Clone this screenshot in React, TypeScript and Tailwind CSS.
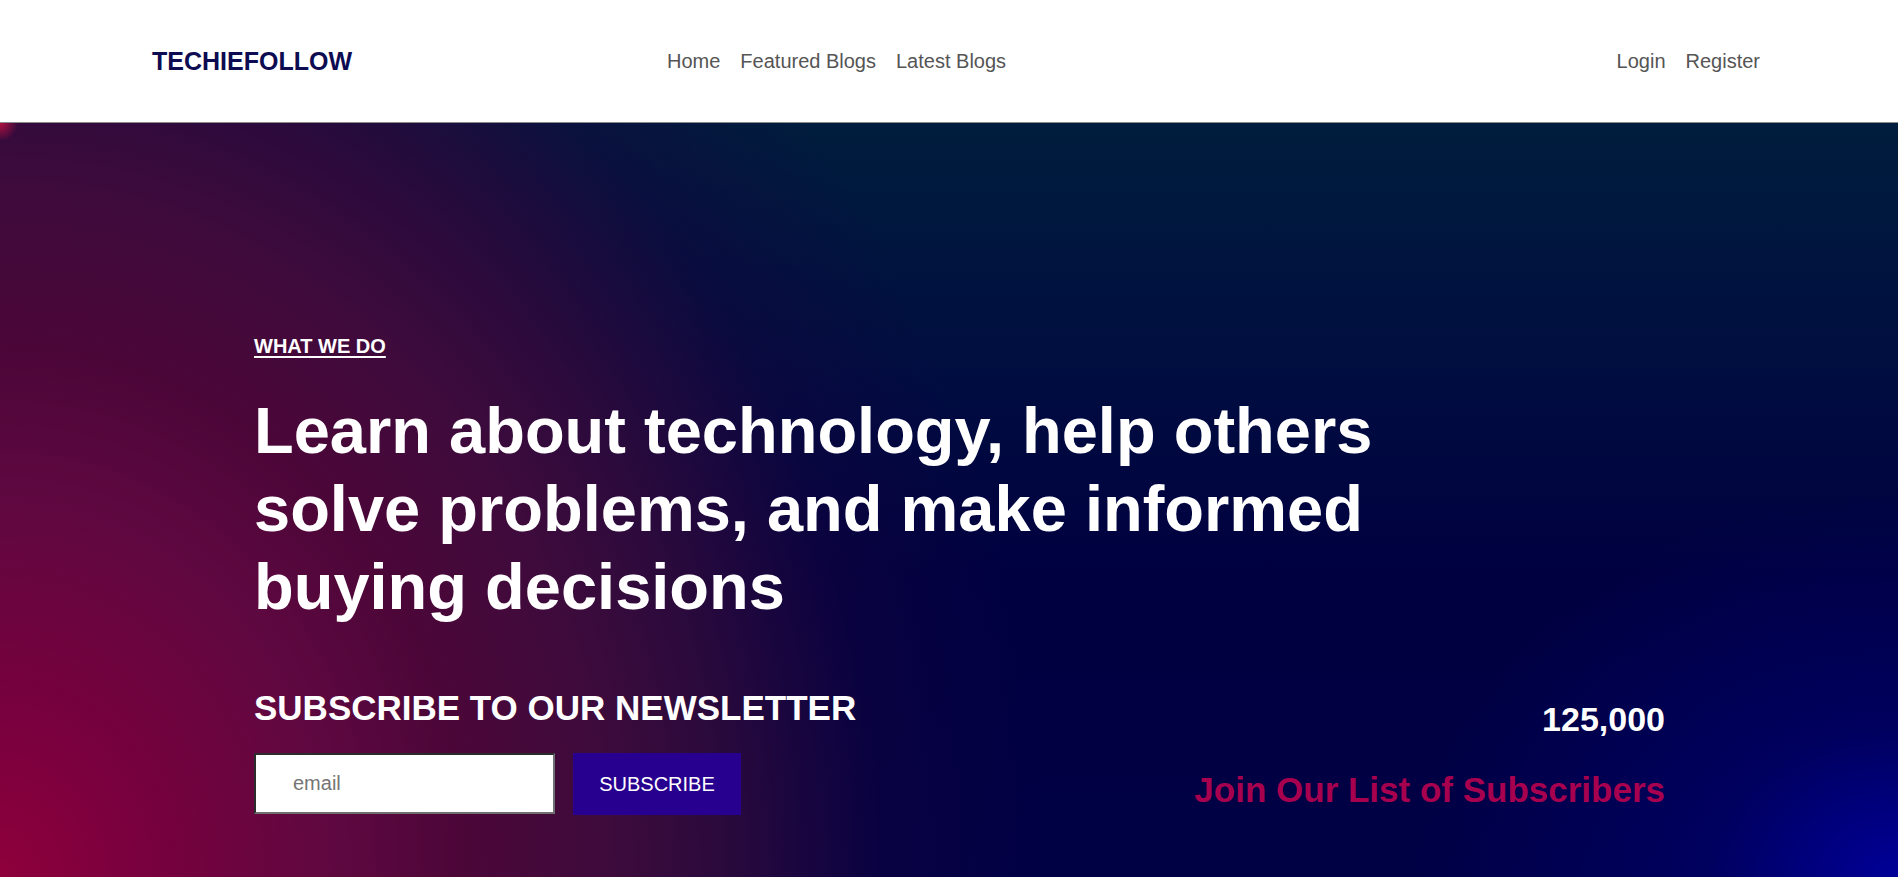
import React from 'react';

const navLinks = ['Home', 'Featured Blogs', 'Latest Blogs'];

export default function App() {
  return (
    <div className="min-h-screen bg-white font-['Liberation_Sans',Arial,sans-serif]">
      {/* top bar */}
      <header className="flex h-[122px] items-center bg-white pl-[152px] pr-[138px]">
        <div className="w-[515px] text-[25px] font-bold leading-none text-[#0d0b52]">TECHIEFOLLOW</div>
        <nav className="flex gap-[20px] text-[20px] text-[#555555]">
          {navLinks.map((l) => (
            <a key={l} href="#" className="hover:text-black">{l}</a>
          ))}
        </nav>
        <div className="ml-auto flex gap-[20px] text-[20px] text-[#555555]">
          <a href="#">Login</a>
          <a href="#">Register</a>
        </div>
      </header>

      {/* hero */}
      <section className="h-[755px] border-t border-[#8a8a8a] pl-[254px] pr-[233px] pt-[208px] [background:radial-gradient(circle_18px_at_0_0,#b3103f,transparent),radial-gradient(ellipse_480px_380px_at_100%_100%,#000098,rgba(0,0,120,0.5)_40%,transparent),radial-gradient(ellipse_1100px_1250px_at_0%_100%,#8e003b_0%,#7a003e_12%,#5e0840_31%,#4c0638_42%,#3e0b3c_55%,#2c0a3c_65%,rgba(20,4,62,0.45)_80%,rgba(0,0,64,0)_95%),linear-gradient(to_bottom,#001d3d_0%,#000c40_35%,#000040_60%,#000045_100%)]">
        <a href="#" className="text-[20px] font-bold text-white underline underline-offset-[3px]">WHAT WE DO</a>
        <h1 className="mt-[31px] w-[1150px] text-[65px] font-bold leading-[78px] text-white">
          Learn about technology, help others solve problems, and make informed buying decisions
        </h1>

        <div className="mt-[56px] flex items-start justify-between">
          <div>
            <h2 className="text-[35px] font-bold text-white">SUBSCRIBE TO OUR NEWSLETTER</h2>
            <form className="mt-[18px] flex gap-[18px]" onSubmit={(e) => e.preventDefault()}>
              <input
                type="email"
                placeholder="email"
                className="h-[61px] w-[301px] border-2 border-t-[#2b2b2b] border-l-[#2b2b2b] border-r-[#707070] border-b-[#707070] bg-white pl-[37px] text-[20px] text-black outline-none placeholder:text-[#757575]"
              />
              <button className="h-[62px] w-[168px] bg-[#28008f] text-[20px] text-white">SUBSCRIBE</button>
            </form>
          </div>
          <div className="mt-[12px] text-right">
            <p className="text-[34px] font-bold text-white">125,000</p>
            <p className="mt-[19px] text-[35px] font-bold text-[#a6004f]">Join Our List of Subscribers</p>
          </div>
        </div>
      </section>
    </div>
  );
}
